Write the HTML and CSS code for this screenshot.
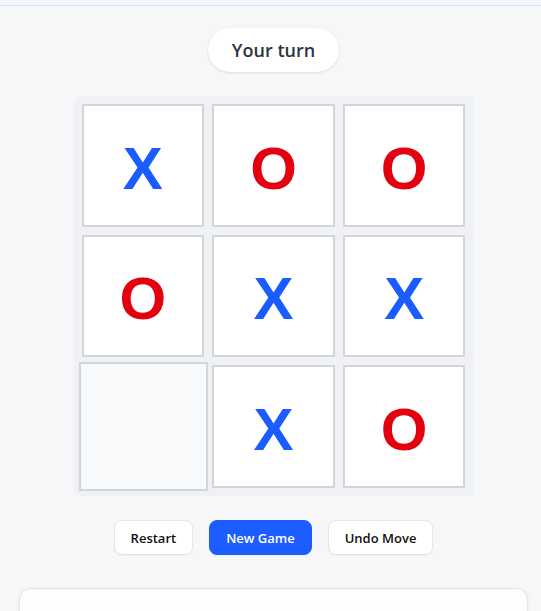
FILE: index.html
```html
<!DOCTYPE html>
<html lang="en">
<head>
<meta charset="utf-8">
<title>Tic Tac Toe</title>
<link rel="stylesheet" href="styles.css">
</head>
<body>
<div class="topbar"></div>
<main class="game">
  <div class="status">Your turn</div>
  <div class="board">
    <div class="cell x">X</div>
    <div class="cell o">O</div>
    <div class="cell o">O</div>
    <div class="cell o">O</div>
    <div class="cell x">X</div>
    <div class="cell x">X</div>
    <div class="cell empty hover"></div>
    <div class="cell x">X</div>
    <div class="cell o">O</div>
  </div>
  <div class="actions">
    <button class="btn">Restart</button>
    <button class="btn primary">New Game</button>
    <button class="btn">Undo Move</button>
  </div>
  <section class="panel"></section>
</main>
</body>
</html>
```
FILE: styles.css
```css
* { box-sizing: border-box; }
html, body { margin: 0; padding: 0; }
body {
  background: #f6f7f9;
  font-family: "Open Sans", "Noto Sans", Arial, sans-serif;
  color: #1f2937;
  overflow: hidden;
}
.topbar {
  height: 6px;
  background: #f2f6fc;
  border-bottom: 1px solid #dde1e8;
}
.game {
  display: flex;
  flex-direction: column;
  align-items: center;
  padding: 22px 13px 0 19px;
}
.status {
  height: 44px;
  padding: 0 24px;
  border-radius: 22px;
  background: #fff;
  box-shadow: 0 1px 3px rgba(0,0,0,0.10), 0 0 1px rgba(0,0,0,0.05);
  display: flex;
  align-items: center;
  font-size: 18px;
  font-weight: 600;
  color: #2b3443;
}
.board {
  margin-top: 24px;
  width: 400px;
  height: 400px;
  padding: 8px;
  background: #f0f1f4;
  border-radius: 8px;
  display: grid;
  grid-template-columns: repeat(3, 1fr);
  grid-template-rows: repeat(3, 1fr);
  gap: 8px;
}
.cell {
  background: #fff;
  border: 2px solid #d2d6dc;
  display: flex;
  align-items: center;
  justify-content: center;
  padding-top: 7px;
  font-family: "Liberation Sans", Arial, sans-serif;
  font-weight: 700;
  font-size: 60px;
  line-height: 1;
}
.cell.x { color: #1a5cff; }
.cell.o { color: #e3000f; }
.cell.hover {
  background: #f8f9fb;
  transform: scale(1.05);
}
.actions {
  margin-top: 24px;
  display: flex;
  gap: 16px;
}
.btn {
  height: 35px;
  padding: 0 16px;
  border: 1px solid #e3e5e9;
  border-radius: 8px;
  background: #fff;
  font-family: "Open Sans", "Noto Sans", Arial, sans-serif;
  font-size: 13px;
  font-weight: 600;
  color: #111;
  box-shadow: 0 1px 2px rgba(0,0,0,0.04);
}
.btn.primary {
  background: #1c5dff;
  border-color: #1c5dff;
  color: #fff;
}
.panel {
  margin-top: 33px;
  align-self: stretch;
  height: 120px;
  background: #fdfdfd;
  border: 1px solid #e3e5e9;
  border-radius: 12px;
  box-shadow: 0 1px 4px rgba(0,0,0,0.06);
}
```
